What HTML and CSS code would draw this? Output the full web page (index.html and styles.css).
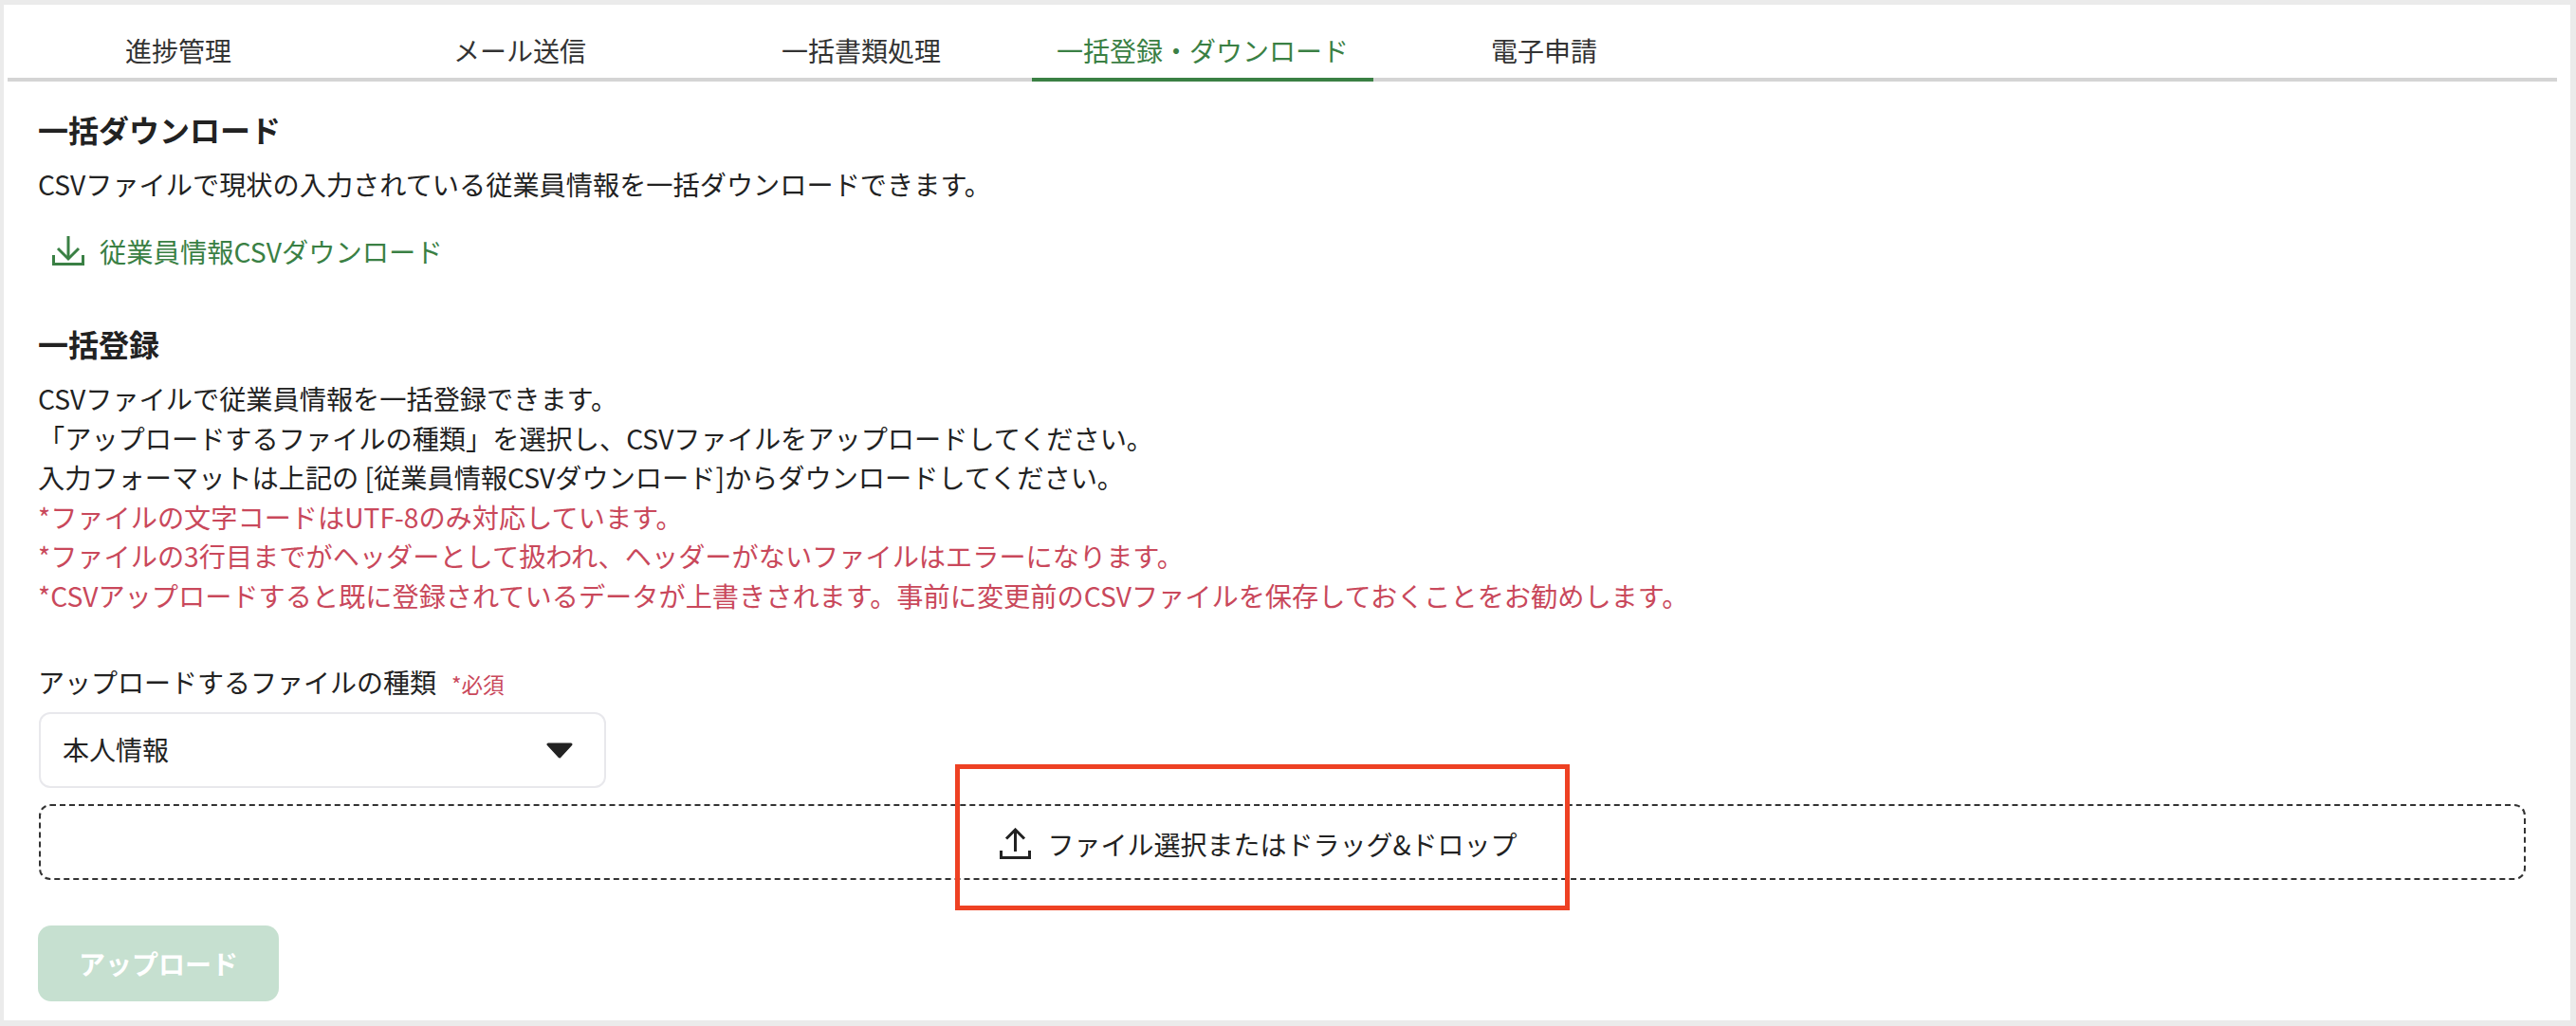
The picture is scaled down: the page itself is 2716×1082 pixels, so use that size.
FILE: index.html
```html
<!DOCTYPE html>
<html lang="ja">
<head>
    <meta charset="UTF-8">
    <title>一括登録・ダウンロード</title>
    <link rel="stylesheet" href="styles.css">
</head>
<body>
    <div class="card">
        <nav class="tabs">
            <a href="#" class="tab">進捗管理</a>
            <a href="#" class="tab">メール送信</a>
            <a href="#" class="tab">一括書類処理</a>
            <a href="#" class="tab active">一括登録・ダウンロード</a>
            <a href="#" class="tab">電子申請</a>
        </nav>

        <div class="content">
            <h2 class="title">一括ダウンロード</h2>
            <p class="text">CSVファイルで現状の入力されている従業員情報を一括ダウンロードできます。</p>
            <a href="#" class="download-link">
                <svg class="download-icon" viewBox="0 0 34 31" fill="none" stroke="currentColor" stroke-width="3">
                    <path d="M17 0V23"/>
                    <path d="M6 13L17 24L28 13"/>
                    <path d="M1.5 20V29.5H32.5V20"/>
                </svg>
                従業員情報CSVダウンロード
            </a>

            <h2 class="title title-register">一括登録</h2>
            <div class="notes">
                <p class="text">CSVファイルで従業員情報を一括登録できます。</p>
                <p class="text">「アップロードするファイルの種類」を選択し、CSVファイルをアップロードしてください。</p>
                <p class="text">入力フォーマットは上記の [従業員情報CSVダウンロード]からダウンロードしてください。</p>
                <p class="text warn">*ファイルの文字コードはUTF-8のみ対応しています。</p>
                <p class="text warn">*ファイルの3行目までがヘッダーとして扱われ、ヘッダーがないファイルはエラーになります。</p>
                <p class="text warn">*CSVアップロードすると既に登録されているデータが上書きされます。事前に変更前のCSVファイルを保存しておくことをお勧めします。</p>
            </div>

            <div class="field-label">
                <span>アップロードするファイルの種類</span>
                <span class="required">*必須</span>
            </div>
            <div class="select">
                <span class="select-value">本人情報</span>
                <svg class="select-arrow" viewBox="0 0 28 17">
                    <path d="M2 2H26L14 15Z" fill="#222" stroke="#222" stroke-width="3" stroke-linejoin="round"/>
                </svg>
            </div>

            <div class="dropzone">
                <svg class="upload-icon" viewBox="0 0 33 33" fill="none" stroke="#222" stroke-width="3">
                    <path d="M16.5 2V25"/>
                    <path d="M7 11.5L16.5 2L26 11.5"/>
                    <path d="M1.5 24V31.5H31.5V24"/>
                </svg>
                <span>ファイル選択またはドラッグ&amp;ドロップ</span>
            </div>

            <button class="upload-btn" disabled>アップロード</button>
        </div>

        <!-- annotation drawn over the dropzone -->
        <div class="highlight"></div>
    </div>
</body>
</html>
```

FILE: styles.css
```css
* {
    margin: 0;
    padding: 0;
    box-sizing: border-box;
}

body {
    font-family: "Noto Sans CJK JP", "Noto Sans", sans-serif;
    font-size: 28px;
    background-color: #ebebeb;
    color: #222;
    height: 1082px;
    overflow: hidden;
    padding: 5px 6px 6px 4px;
}

.card {
    position: relative;
    height: 1071px;
    background-color: #fff;
}

.tabs {
    display: flex;
    height: 81px;
    margin: 0 14px 0 4px;
    border-bottom: 4px solid #d4d4d4;
}

.tab {
    width: 360px;
    height: 81px;
    padding-top: 26px;
    line-height: 44px;
    text-align: center;
    color: #333;
    text-decoration: none;
}

.tab.active {
    color: #3a8044;
    border-bottom: 4px solid #3a8044;
}

.content {
    padding: 0 47px 0 36px;
}

.title {
    font-size: 32px;
    font-weight: 700;
    line-height: 44px;
    margin-top: 28px;
}

.title-register {
    margin-top: 59px;
}

.text {
    font-size: 28.2px;
    line-height: 41.6px;
}

.title + .text {
    margin-top: 15px;
}

.notes {
    margin-top: 15.5px;
}

.warn {
    color: #c9485b;
}

.download-link {
    display: flex;
    align-items: center;
    margin-top: 34px;
    padding-left: 15px;
    height: 32px;
    font-size: 28.3px;
    color: #3a8044;
    text-decoration: none;
}

.download-icon {
    width: 34px;
    height: 31px;
    margin-right: 16px;
}

.field-label {
    display: flex;
    align-items: baseline;
    margin-top: 49.5px;
    line-height: 42px;
}

.required {
    font-size: 22.5px;
    margin-left: 16px;
    color: #c9485b;
}

.select {
    display: flex;
    align-items: center;
    justify-content: space-between;
    width: 598px;
    height: 80px;
    margin-top: 9px;
    margin-left: 1px;
    padding: 0 33px 0 23px;
    border: 2px solid #e8e8ec;
    border-radius: 12px;
}

.select-value {
    margin-bottom: 2px;
}

.select-arrow {
    width: 28px;
    height: 17px;
}

.dropzone {
    display: flex;
    align-items: center;
    justify-content: center;
    height: 80px;
    margin-top: 17px;
    margin-left: 1px;
    padding: 3px 50px 0 0;
    border: 2px dashed #333;
    border-radius: 12px;
}

.upload-icon {
    width: 33px;
    height: 33px;
    margin-right: 17px;
}

.upload-btn {
    display: block;
    width: 254px;
    height: 80px;
    margin-top: 48px;
    border: none;
    border-radius: 14px;
    background-color: #c6e0d0;
    color: #fff;
    font-family: inherit;
    font-size: 28px;
    font-weight: 700;
}

.highlight {
    position: absolute;
    left: 1003px;
    top: 801px;
    width: 648px;
    height: 154px;
    border: 5px solid #ee4123;
}
```
